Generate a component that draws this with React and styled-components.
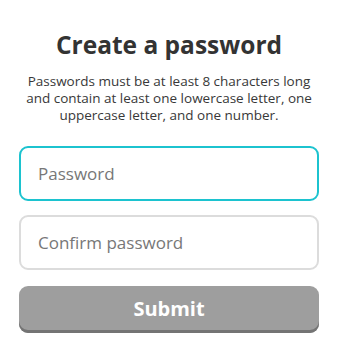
import styled, { createGlobalStyle } from "styled-components";

const GlobalStyle = createGlobalStyle`
  * {
    box-sizing: border-box;
  }
  body {
    margin: 0;
    background: #fff;
    font-family: "Open Sans", "Noto Sans", sans-serif;
  }
`;

function App() {
  return (
    <>
      <GlobalStyle />
      <StyledForm onSubmit={(e) => e.preventDefault()}>
        <StyledTitle>Create a password</StyledTitle>
        <StyledHint>
          Passwords must be at least 8 characters long and contain at least one
          lowercase letter, one uppercase letter, and one number.
        </StyledHint>
        <StyledFields>
          <StyledInput type="password" placeholder="Password" autoFocus />
          <StyledInput type="password" placeholder="Confirm password" />
          <StyledButton type="submit" disabled>
            Submit
          </StyledButton>
        </StyledFields>
      </StyledForm>
    </>
  );
}

export default App;

const StyledForm = styled.form`
  display: flex;
  flex-direction: column;
  align-items: center;
  padding: 29px 24px 0 19px;
  width: 343px;
`;
const StyledTitle = styled.h1`
  margin: 0;
  font-size: 24.5px;
  font-weight: 700;
  color: #333;
  line-height: 32px;
`;
const StyledHint = styled.p`
  margin: 12px 0 0 0;
  font-size: 13.5px;
  line-height: 17px;
  color: #383838;
  text-align: center;
  max-width: 300px;
`;
const StyledFields = styled.div`
  display: flex;
  flex-direction: column;
  gap: 14px;
  width: 100%;
  margin-top: 22px;
`;
const StyledInput = styled.input`
  width: 100%;
  height: 55px;
  padding: 0 17px;
  border: 2px solid #dcdcdc;
  border-radius: 9px;
  font-family: inherit;
  font-size: 17px;
  color: #333;
  caret-color: #222;
  outline: none;
  &::placeholder {
    color: #777;
  }
  &:focus {
    border-color: #1cc3cf;
  }
`;
const StyledButton = styled.button`
  margin-top: 2px;
  width: 100%;
  height: 47px;
  border: none;
  border-radius: 9px;
  background-color: #9e9e9e;
  box-shadow: inset 0 -3px 0 #747474;
  color: #fff;
  font-family: inherit;
  font-size: 20px;
  font-weight: 700;
  padding-bottom: 3px;
`;
